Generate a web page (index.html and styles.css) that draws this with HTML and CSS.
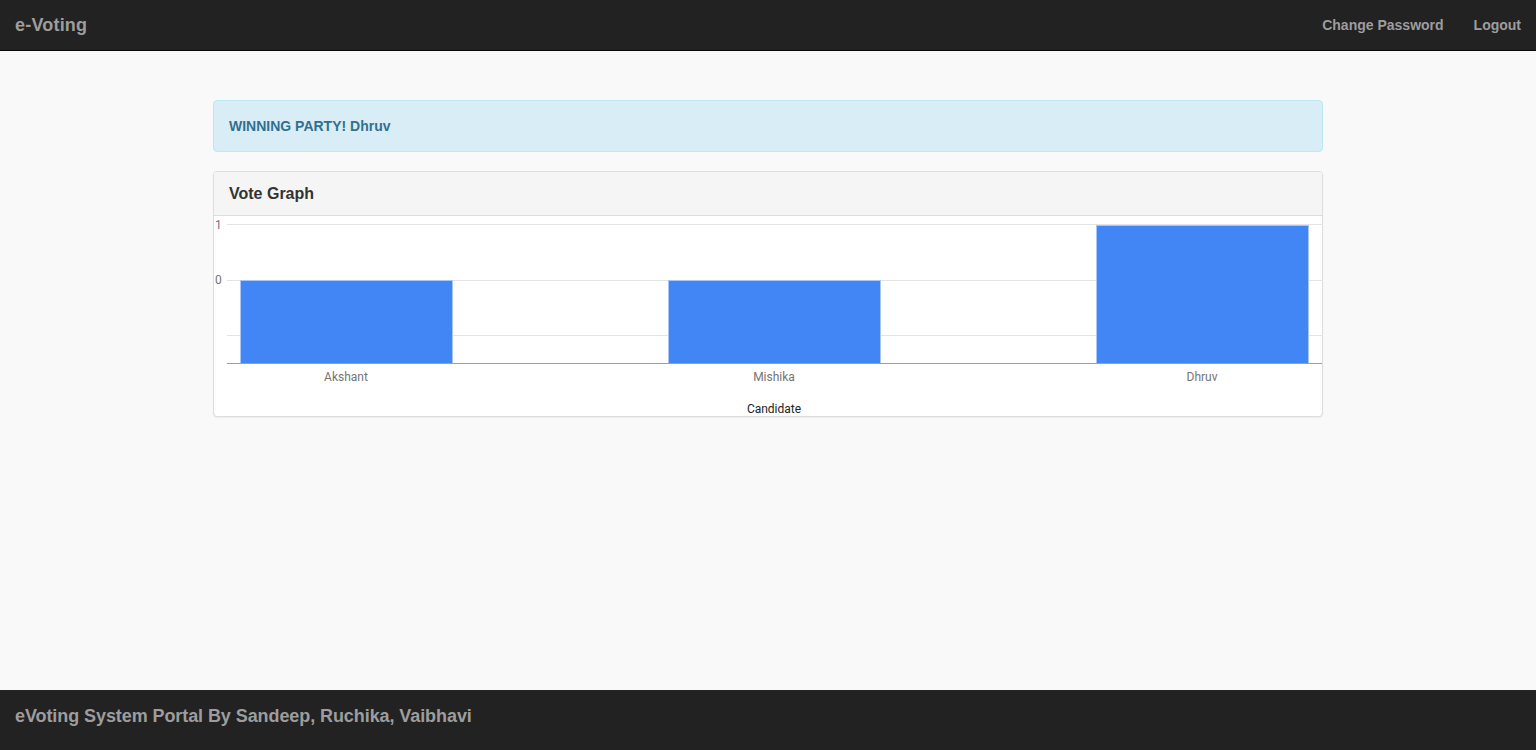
FILE: index.html
```html
<!DOCTYPE html>
<html>
<head>
<meta charset="utf-8">
<title>e-Voting</title>
<link rel="stylesheet" href="styles.css">
</head>
<body>
<nav class="navbar">
  <a class="brand" href="#">e-Voting</a>
  <ul class="nav-links">
    <li><a href="#">Change Password</a></li>
    <li><a href="#">Logout</a></li>
  </ul>
</nav>
<main class="main">
  <div class="container">
    <div class="alert">WINNING PARTY! Dhruv</div>
    <div class="panel">
      <div class="panel-heading"><h3 class="panel-title">Vote Graph</h3></div>
      <div class="panel-body">
        <svg class="chart" width="1108" height="200" viewBox="0 0 1108 200">
          <g stroke="#e4e4e4" stroke-width="1">
            <line x1="13" y1="8.5" x2="1108" y2="8.5"/>
            <line x1="13" y1="64.5" x2="1108" y2="64.5"/>
            <line x1="13" y1="119.5" x2="1108" y2="119.5"/>
          </g>
          <g class="ytick">
            <text x="1" y="13">1</text>
            <text x="1" y="68">0</text>
          </g>
          <g fill="#4285f4" stroke="#a9c6f8" stroke-width="1">
            <rect x="26.5" y="64.5" width="212" height="83"/>
            <rect x="454.5" y="64.5" width="212" height="83"/>
            <rect x="882.5" y="9.5" width="212" height="138"/>
          </g>
          <line x1="13" y1="147.5" x2="1108" y2="147.5" stroke="#9e9e9e" stroke-width="1"/>
          <g class="xtick" text-anchor="middle">
            <text x="132" y="165">Akshant</text>
            <text x="560" y="165">Mishika</text>
            <text x="988" y="165">Dhruv</text>
          </g>
          <text class="axis-title" x="560" y="197" text-anchor="middle">Candidate</text>
        </svg>
      </div>
    </div>
  </div>
</main>
<footer class="footer">eVoting System Portal By Sandeep, Ruchika, Vaibhavi</footer>
</body>
</html>
```
FILE: styles.css
```css
* { box-sizing: border-box; }
html, body { height: 100%; }
body {
  margin: 0;
  background: #f9f9f9;
  font-family: "Liberation Sans", Arial, sans-serif;
  font-size: 14px;
  line-height: 20px;
  color: #333;
  display: flex;
  flex-direction: column;
}
a { text-decoration: none; }
.navbar {
  height: 51px;
  background: #222;
  border-bottom: 1px solid #080808;
  display: flex;
  justify-content: space-between;
  align-items: stretch;
  flex-shrink: 0;
}
.brand {
  color: #9d9d9d;
  font-size: 18px;
  font-weight: bold;
  line-height: 20px;
  padding: 15px 15px;
  letter-spacing: 0.2px;
}
.nav-links {
  list-style: none;
  margin: 0;
  padding: 0;
  display: flex;
}
.nav-links a {
  display: block;
  color: #9d9d9d;
  font-weight: bold;
  padding: 15px 15px;
  line-height: 20px;
  font-size: 14px;
}
.main {
  flex: 1;
  padding-top: 49px;
}
.container {
  width: 1110px;
  margin: 0 auto;
}
.alert {
  background: #d9edf7;
  border: 1px solid #bce8f1;
  color: #31708f;
  border-radius: 4px;
  padding: 15px;
  font-weight: bold;
  margin-bottom: 19px;
}
.panel {
  background: #fff;
  border: 1px solid #ddd;
  border-radius: 4px;
  box-shadow: 0 1px 1px rgba(0,0,0,.05);
}
.panel-heading {
  background: #f5f5f5;
  border-bottom: 1px solid #ddd;
  border-radius: 3px 3px 0 0;
  padding: 12px 15px 11px;
}
.panel-title {
  margin: 0;
  font-size: 16px;
  line-height: 20px;
  font-weight: bold;
  color: #333;
}
.panel-body { padding: 0; }
.chart { display: block; font-family: Roboto, "Liberation Sans", sans-serif; }
.ytick text, .xtick text { font-size: 12px; fill: #757575; }
.axis-title { font-size: 12px; fill: #222; }
.footer {
  height: 60px;
  flex-shrink: 0;
  background: #222;
  color: #9d9d9d;
  font-size: 18px;
  font-weight: bold;
  line-height: 20px;
  padding: 16px 15px;
  letter-spacing: -0.08px;
}
```
